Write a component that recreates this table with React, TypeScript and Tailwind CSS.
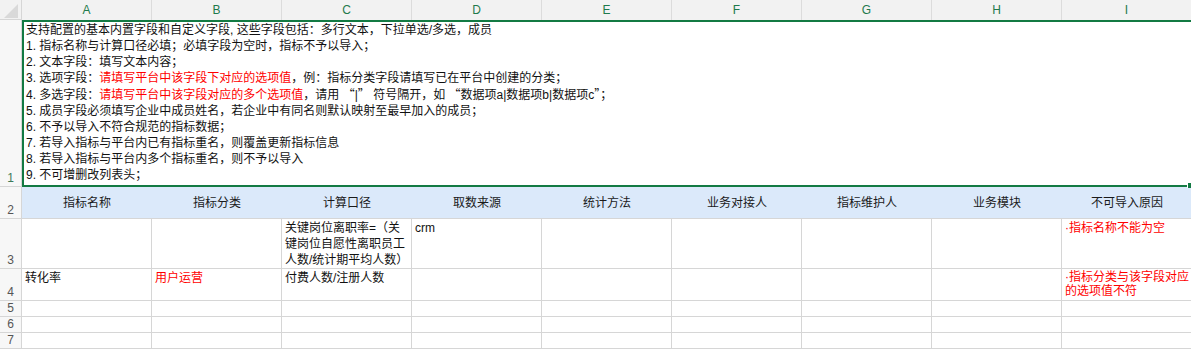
import React from 'react';

const COLS = ['A', 'B', 'C', 'D', 'E', 'F', 'G', 'H', 'I'];
const HEADERS = ['指标名称', '指标分类', '计算口径', '取数来源', '统计方法', '业务对接人', '指标维护人', '业务模块', '不可导入原因'];

type Cell = { lines?: string[]; red?: boolean; tight?: boolean };

const ROW3: Cell[] = [
  {},
  {},
  { lines: ['关键岗位离职率=（关', '键岗位自愿性离职员工', '人数/统计期平均人数）'] },
  { lines: ['crm'] },
  {},
  {},
  {},
  {},
  { lines: ['·指标名称不能为空'], red: true },
];

const ROW4: Cell[] = [
  { lines: ['转化率'] },
  { lines: ['用户运营'], red: true },
  { lines: ['付费人数/注册人数'] },
  {},
  {},
  {},
  {},
  {},
  { lines: ['·指标分类与该字段对应', '的选项值不符'], red: true, tight: true },
];

const Red: React.FC<{ children: React.ReactNode }> = ({ children }) => (
  <span className="text-[#ff0000]">{children}</span>
);

// full-width CJK quote marks
const Q: React.FC<{ children: React.ReactNode }> = ({ children }) => (
  <span style={{ fontFamily: '"Noto Sans CJK SC", sans-serif' }}>{children}</span>
);

const RowNum: React.FC<{ n: number; active?: boolean }> = ({ n, active }) => (
  <div
    className={`flex items-end justify-center pb-[1px] bg-[#f7f7f7] border-r border-b border-[#d6d6d6] text-[12px] leading-[14px] ${
      active ? 'text-[#3d7a5a]' : 'text-[#555555]'
    }`}
  >
    {n}
  </div>
);

const DataRow: React.FC<{ n: number; cells: Cell[] }> = ({ n, cells }) => (
  <>
    <RowNum n={n} />
    {cells.map((c, i) => (
      <div
        key={i}
        className={`border-r border-b border-[#d6d6d6] pl-[3px] pt-[1px] overflow-hidden ${
          c.tight ? 'leading-[14px]' : 'leading-[16px]'
        } ${c.red ? 'text-[#ff0000]' : 'text-[#111111]'}`}
      >
        {c.lines?.map((l, j) => (
          <div key={j} className="whitespace-nowrap">
            {l}
          </div>
        ))}
      </div>
    ))}
  </>
);

const EmptyRow: React.FC<{ n: number }> = ({ n }) => (
  <>
    <RowNum n={n} />
    {COLS.map((c) => (
      <div key={c} className="border-r border-b border-[#d6d6d6]" />
    ))}
  </>
);

export default function App() {
  return (
    <div
      className="w-[1191px] h-[350px] overflow-hidden bg-white text-[12px] text-[#111111]"
      style={{ fontFamily: '"Liberation Sans", "Noto Sans CJK SC", sans-serif' }}
    >
      <div className="grid grid-cols-[22px_repeat(9,130px)] grid-rows-[20px_167px_32px_50px_32px_16px_16px_16px]">
        {/* column letters */}
        <div className="relative bg-[#f2f2f2] border-r border-b border-[#d6d6d6]">
          <svg className="absolute inset-0" width="22" height="20" viewBox="0 0 22 20">
            <polygon points="18,4 18,18 4,18" fill="#d9d9d9" />
          </svg>
        </div>
        {COLS.map((c) => (
          <div
            key={c}
            className="flex items-center justify-center bg-[#f2f2f2] border-r border-[#dcdcdc] text-[12px] text-[#1f7a4c]"
          >
            {c}
          </div>
        ))}

        {/* row 1: notes, selected */}
        <RowNum n={1} active />
        <div className="relative col-span-9 border-t-2 border-l-2 border-b-2 border-[#137a43] pl-[2px] leading-[16px]">
          <div className="whitespace-nowrap">支持配置的基本内置字段和自定义字段, 这些字段包括：多行文本，下拉单选/多选，成员</div>
          <div className="whitespace-nowrap">1. 指标名称与计算口径必填；必填字段为空时，指标不予以导入；</div>
          <div className="whitespace-nowrap">2. 文本字段：填写文本内容；</div>
          <div className="whitespace-nowrap">
            3. 选项字段：<Red>请填写平台中该字段下对应的选项值</Red>，例：指标分类字段请填写已在平台中创建的分类；
          </div>
          <div className="whitespace-nowrap">
            4. 多选字段：<Red>请填写平台中该字段对应的多个选项值</Red>，请用 <Q>“</Q>|<Q>”</Q> 符号隔开，如 <Q>“</Q>数据项a|数据项b|数据项c<Q>”</Q>；
          </div>
          <div className="whitespace-nowrap">5. 成员字段必须填写企业中成员姓名，若企业中有同名则默认映射至最早加入的成员；</div>
          <div className="whitespace-nowrap">6. 不予以导入不符合规范的指标数据；</div>
          <div className="whitespace-nowrap">7. 若导入指标与平台内已有指标重名，则覆盖更新指标信息</div>
          <div className="whitespace-nowrap">8. 若导入指标与平台内多个指标重名，则不予以导入</div>
          <div className="whitespace-nowrap">9. 不可增删改列表头；</div>
          <div className="absolute right-[1px] bottom-[-3px] w-[4px] h-[5px] bg-[#137a43] border-l border-white" />
        </div>

        {/* row 2: blue header */}
        <RowNum n={2} />
        {HEADERS.map((h) => (
          <div
            key={h}
            className="flex items-center justify-center bg-[#dbe9fa] border-b border-[#d6d6d6] text-[#1a1a1a]"
          >
            {h}
          </div>
        ))}

        <DataRow n={3} cells={ROW3} />
        <DataRow n={4} cells={ROW4} />
        <EmptyRow n={5} />
        <EmptyRow n={6} />
        <EmptyRow n={7} />
      </div>
    </div>
  );
}
